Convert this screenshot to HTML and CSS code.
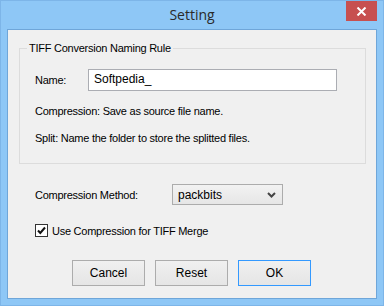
FILE: index.html
```html
<!DOCTYPE html>
<html>
<head>
<meta charset="utf-8">
<link rel="stylesheet" href="styles.css">
</head>
<body>
<div class="window">
  <div class="titlebar">
    <span class="title">Setting</span>
    <div class="close">
      <svg width="11" height="9" viewBox="0 0 11 9"><path d="M1.5 0.5 L9.5 8.5 M9.5 0.5 L1.5 8.5" stroke="#fff" stroke-width="2" fill="none"/></svg>
    </div>
  </div>
  <div class="client">
    <fieldset class="group">
      <legend>TIFF Conversion Naming Rule</legend>
      <div class="row name-row">
        <span class="label name-label">Name:</span>
        <div class="input">Softpedia_</div>
      </div>
      <div class="line first">Compression: Save as source file name.</div>
      <div class="line second">Split: Name the folder to store the splitted files.</div>
    </fieldset>
    <div class="row method-row">
      <span class="label method-label">Compression Method:</span>
      <div class="select">
        <span>packbits</span>
        <svg width="9" height="6" viewBox="0 0 9 6"><path d="M1 1 L4.5 4.5 L8 1" stroke="#444" stroke-width="2" fill="none"/></svg>
      </div>
    </div>
    <div class="row check-row">
      <span class="checkbox">
        <svg width="13" height="13" viewBox="0 0 13 13"><rect x="0.5" y="0.5" width="12" height="12" fill="#fff" stroke="#333"/><path d="M3 6.5 L5.3 9 L10 3.5" stroke="#111" stroke-width="2" fill="none"/></svg>
      </span>
      <span class="label">Use Compression for TIFF Merge</span>
    </div>
    <div class="buttons">
      <div class="btn">Cancel</div>
      <div class="btn">Reset</div>
      <div class="btn default">OK</div>
    </div>
  </div>
</div>
</body>
</html>
```

FILE: styles.css
```css
html, body {
  margin: 0;
  padding: 0;
}
body {
  width: 384px;
  height: 306px;
  overflow: hidden;
  font-family: "Liberation Sans", Arial, sans-serif;
  font-size: 11px;
  letter-spacing: -0.25px;
  color: #000;
}
.window {
  position: relative;
  box-sizing: border-box;
  width: 384px;
  height: 306px;
  background: #8ec7f6;
  border: 1px solid #7db5e8;
  display: flex;
  flex-direction: column;
}
.titlebar {
  height: 28px;
  display: flex;
  align-items: center;
  justify-content: center;
}
.title {
  font-family: "Open Sans", "Noto Sans", sans-serif;
  font-size: 14px;
  letter-spacing: 0;
  color: #2a2a2a;
  margin-top: -1px;
}
.close {
  position: absolute;
  top: 0;
  left: 345px;
  width: 31px;
  height: 20px;
  background: #c75050;
  display: flex;
  align-items: center;
  justify-content: center;
}
.client {
  flex: 1;
  margin: 0 6px 6px 6px;
  border: 1px solid #6fa6d9;
  background: #f0f0f0;
  padding: 12px 10px 0 11px;
  display: flex;
  flex-direction: column;
}
.group {
  margin: 0;
  border: 1px solid #dcdcdc;
  padding: 0 0 18px 15px;
  min-width: 0;
}
.group legend {
  padding: 0 2px;
  margin-left: -8px;
  line-height: 13px;
}
.row {
  display: flex;
  align-items: center;
}
.name-row {
  margin-top: 14px;
}
.name-label {
  width: 53px;
}
.input {
  box-sizing: border-box;
  width: 249px;
  height: 22px;
  background: #fff;
  border: 1px solid #abadb3;
  padding: 0 5px;
  line-height: 18px;
  font-size: 12px;
  letter-spacing: 0;
}
.line {
  line-height: 13px;
}
.line.first {
  margin-top: 14px;
}
.line.second {
  margin-top: 14px;
}
.method-row {
  margin-top: 20px;
  margin-left: 16px;
}
.method-label {
  width: 137px;
}
.select {
  box-sizing: border-box;
  width: 111px;
  height: 21px;
  border: 1px solid #acacac;
  background: linear-gradient(#f2f2f2, #e6e6e6);
  display: flex;
  align-items: center;
  justify-content: space-between;
  padding: 0 6px 0 5px;
  font-size: 12px;
  letter-spacing: 0;
}
.check-row {
  margin-top: 19px;
  margin-left: 16px;
}
.checkbox {
  display: flex;
  width: 13px;
  height: 13px;
  margin-right: 4px;
}
.buttons {
  display: flex;
  gap: 10px;
  margin-top: 23px;
  margin-left: 53px;
}
.btn {
  box-sizing: border-box;
  width: 73px;
  height: 26px;
  border: 1px solid #acacac;
  background: linear-gradient(#f0f0f0, #e5e5e5);
  display: flex;
  align-items: center;
  justify-content: center;
  font-size: 12px;
  letter-spacing: 0;
}
.btn.default {
  border-color: #3399ff;
}
```
